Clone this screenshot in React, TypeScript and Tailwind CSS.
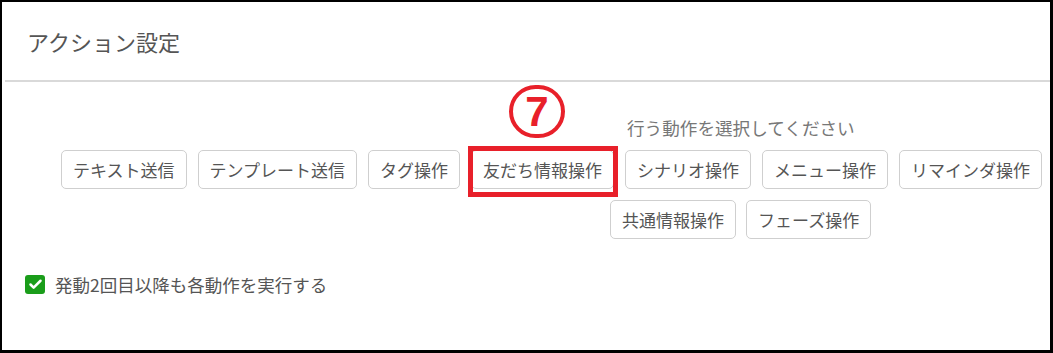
import { Check } from 'lucide-react';

const rowOne = ['テキスト送信', 'テンプレート送信', 'タグ操作', '友だち情報操作', 'シナリオ操作', 'メニュー操作', 'リマインダ操作'];
const rowTwo = ['共通情報操作', 'フェーズ操作'];

const font = { fontFamily: '"Noto Sans CJK JP", "Noto Sans", sans-serif' };

const ActionButton = ({ label, highlight }: { label: string; highlight?: boolean }) => (
  <div className="relative">
    <button className="h-[39px] px-[11px] border border-[#cfcfcf] rounded-[5px] bg-white text-[17px] leading-none text-[#555]">
      {label}
    </button>
    {highlight && (
      <>
        {/* annotation box */}
        <div className="absolute -top-[4px] -bottom-[8px] -left-[3px] -right-[4px] border-[5px] border-[#e8202a] pointer-events-none" />
        {/* circled number */}
        <div className="absolute left-[38px] -top-[65px] w-[56px] h-[53px] rounded-full border-[4px] border-[#e8202a] flex items-center justify-center">
          <span className="text-[#e8202a] text-[42px] font-bold leading-none" style={{ fontFamily: '"Liberation Sans", Arial, sans-serif' }}>
            7
          </span>
        </div>
      </>
    )}
  </div>
);

export default function App() {
  return (
    <div
      className="w-[1053px] h-[353px] bg-white border-l-2 border-t-2 border-r-[3px] border-b-[3px] border-black flex flex-col"
      style={font}
    >
      {/* Header */}
      <div className="h-[78px] flex items-center pl-[25px]">
        <h1 className="text-[22px] text-[#555] leading-none">アクション設定</h1>
      </div>
      <div className="ml-[3px] h-[2px] bg-[#d9d9d9]" />

      {/* Body */}
      <div className="flex flex-col">
        <div className="pt-[34px] pl-[625px] text-[17.6px] leading-[24px] text-[#777]">行う動作を選択してください</div>

        <div className="mt-[10px] pl-[59px] flex gap-[11px]">
          {rowOne.map((label) => (
            <ActionButton key={label} label={label} highlight={label === '友だち情報操作'} />
          ))}
        </div>

        <div className="mt-[11px] pl-[608px] flex gap-[10px]">
          {rowTwo.map((label) => (
            <ActionButton key={label} label={label} />
          ))}
        </div>

        <label className="mt-[36px] pl-[23px] flex items-center gap-[10px]">
          <span className="w-[20px] h-[19px] rounded-[3px] bg-[#1a9d1a] flex items-center justify-center">
            <Check className="text-white" size={15} strokeWidth={4} />
          </span>
          <span className="text-[17.5px] text-[#555] leading-none">発動2回目以降も各動作を実行する</span>
        </label>
      </div>
    </div>
  );
}
